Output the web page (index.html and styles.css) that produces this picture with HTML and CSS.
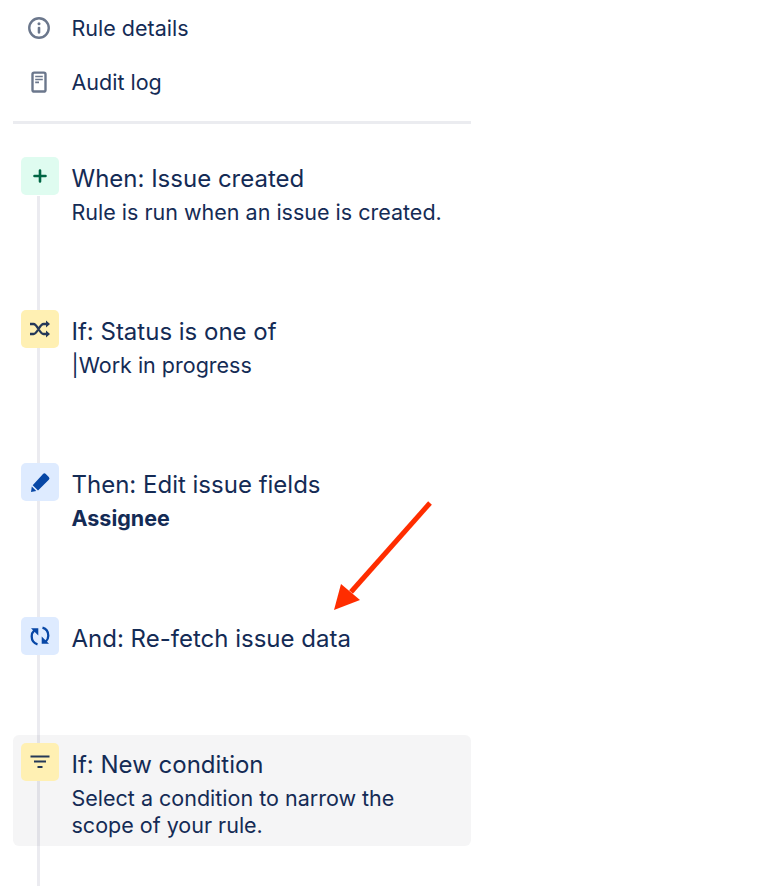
FILE: index.html
```html
<!DOCTYPE html>
<html lang="en">
<head>
    <meta charset="UTF-8">
    <title>Rule details</title>
    <link rel="stylesheet" href="styles.css">
</head>
<body>

<div class="sidebar">
    <div class="menu">
        <div class="menu-item">
            <svg class="menu-icon" viewBox="0 0 24 24"><circle cx="12" cy="12" r="9" fill="none" stroke="#6b778c" stroke-width="2.2"/><circle cx="12" cy="8" r="1.4" fill="#6b778c"/><rect x="10.800" y="10.800" width="2.400" height="6.400" rx="1" fill="#6b778c"/></svg>
            <span>Rule details</span>
        </div>
        <div class="menu-item">
            <svg class="menu-icon" viewBox="0 0 24 24"><rect x="6" y="3.300" width="12" height="17.500" rx="1.500" fill="none" stroke="#6b778c" stroke-width="2.200"/><path d="M8.500 6.900h7M8.500 9.700h7M8.500 12.400h3.500" stroke="#6b778c" stroke-width="1.500"/></svg>
            <span>Audit log</span>
        </div>
    </div>

    <div class="steps">
        <div class="step">
            <div class="step-icon green">
                <svg viewBox="0 0 24 24"><path d="M12 6.500v11M6.500 12h11" stroke="#006644" stroke-width="2.600" stroke-linecap="round"/></svg>
            </div>
            <div class="step-text">
                <div class="step-title">When: Issue created</div>
                <div class="step-desc">Rule is run when an issue is created.</div>
            </div>
        </div>
        <div class="step">
            <div class="step-icon yellow">
                <svg viewBox="0 0 24 24"><path d="M2 7h3.500c4 0 6 10 10 10H19M2 17h3.500c4 0 6-10 10-10H19" fill="none" stroke="#253858" stroke-width="2.300"/><path d="M18 3.500l4 3.500-4 3.500zM18 13.500l4 3.500-4 3.500z" fill="#253858"/></svg>
            </div>
            <div class="step-text">
                <div class="step-title">If: Status is one of</div>
                <div class="step-desc">|Work in progress</div>
            </div>
        </div>
        <div class="step step-edit">
            <div class="step-icon blue">
                <svg viewBox="0 0 24 24"><path d="M15 4a2 2 0 0 1 2.800 0l3 3a2 2 0 0 1 0 2.800L10 20.500 4.700 15.200zM3.800 16.500l4.500 4.500-5.300 1z" fill="#0747a6"/></svg>
            </div>
            <div class="step-text">
                <div class="step-title">Then: Edit issue fields</div>
                <div class="step-desc step-strong">Assignee</div>
            </div>
        </div>
        <div class="step step-short">
            <div class="step-icon blue">
                <svg viewBox="0 0 24 24"><path d="M9.500 20.300C6 19.300 3.700 16 3.700 12.300c0-2.300.9-4.400 2.600-6M14.500 3.700c3.500 1 5.800 4.300 5.800 8 0 2.300-.9 4.400-2.600 6" fill="none" stroke="#0747a6" stroke-width="2.300"/><path d="M3 4.300h7.300v7.200zM21 19.700h-7.300v-7.200z" fill="#0747a6"/></svg>
            </div>
            <div class="step-text">
                <div class="step-title">And: Re-fetch issue data</div>
            </div>
        </div>
        <div class="step step-selected">
            <div class="step-icon yellow">
                <svg viewBox="0 0 24 24"><path d="M2.500 6.500h19M6 11.500h12M9.500 17h5" stroke="#253858" stroke-width="2.200"/></svg>
            </div>
            <div class="step-text">
                <div class="step-title">If: New condition</div>
                <div class="step-desc">Select a condition to narrow the<br>scope of your rule.</div>
            </div>
        </div>
    </div>
</div>

<svg class="arrow" viewBox="0 0 110 120" width="110" height="120"><path d="M99 3L20 92" stroke="#ff2d00" stroke-width="5"/><path d="M3 110L10 84L29 100z" fill="#ff2d00"/></svg>

</body>
</html>
```

FILE: styles.css
```css
/* General Styling */
body {
    margin: 0;
    height: 886px;
    overflow: hidden;
    position: relative;
    background-color: #fff;
    color: #142b55;
    font-family: Inter, "Liberation Sans", sans-serif;
}

.sidebar {
    width: 458px;
    margin-left: 13px;
}

/* Top menu */
.menu {
    padding-top: 1px;
    padding-bottom: 12px;
    border-bottom: 3px solid #ebecf0;
}

.menu-item {
    display: flex;
    align-items: center;
    height: 54px;
    font-size: 21.5px;
}

.menu-icon {
    width: 26px;
    height: 26px;
    margin-left: 13px;
    margin-right: 19.5px;
}

/* Rule steps */
.steps {
    position: relative;
    height: 762px;
    padding-top: 33px;
    box-sizing: border-box;
}

.steps::before {
    content: "";
    position: absolute;
    left: 24px;
    top: 72px;
    bottom: 0;
    width: 3px;
    background-color: #ebebf0;
}

.step {
    position: relative;
    display: flex;
    height: 153px;
    padding-left: 8px;
}

.step-edit {
    height: 154px;
}

.step-short {
    height: 118px;
}

.step-selected {
    height: 111px;
    box-sizing: border-box;
    padding-top: 8px;
    border-radius: 6px;
    background-color: rgba(30, 30, 40, 0.045);
}

.step-icon {
    position: relative;
    flex: none;
    width: 38px;
    height: 38px;
    margin-right: 12.5px;
    border-radius: 5px;
    display: flex;
    align-items: center;
    justify-content: center;
}

.step-icon svg {
    width: 24px;
    height: 24px;
}

.green {
    background-color: #dffcf0;
}

.yellow {
    background-color: #fff0b3;
}

.blue {
    background-color: #deebff;
}

.step-text {
    padding-top: 6px;
}

.step-title {
    font-size: 24px;
    line-height: 32px;
}

.step-desc {
    font-size: 21.5px;
    line-height: 31px;
    margin-top: 2px;
}

.step-selected .step-desc {
    line-height: 27px;
    margin-top: 4px;
}

.step-strong {
    font-weight: 700;
}

/* Red annotation arrow */
.arrow {
    position: absolute;
    left: 331px;
    top: 500px;
}
```
